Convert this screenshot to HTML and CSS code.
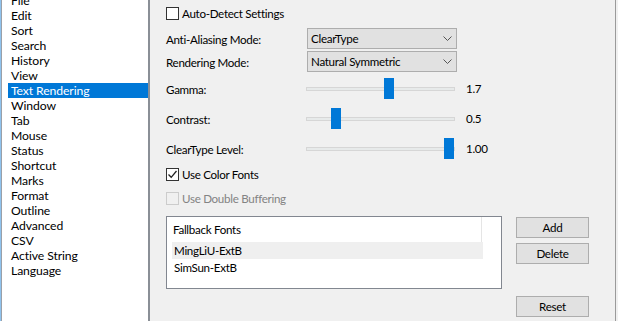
FILE: index.html
```html
<!DOCTYPE html>
<html>
<head>
<meta charset="utf-8">
<link rel="stylesheet" href="styles.css">
</head>
<body>
<div class="window">
  <div class="nav">
    <ul class="nav-list">
      <li>File</li>
      <li>Edit</li>
      <li>Sort</li>
      <li>Search</li>
      <li>History</li>
      <li>View</li>
      <li class="selected">Text Rendering</li>
      <li>Window</li>
      <li>Tab</li>
      <li>Mouse</li>
      <li>Status</li>
      <li>Shortcut</li>
      <li>Marks</li>
      <li>Format</li>
      <li>Outline</li>
      <li>Advanced</li>
      <li>CSV</li>
      <li>Active String</li>
      <li>Language</li>
    </ul>
  </div>
  <div class="panel">
    <div class="check"><span class="box"></span><span>Auto-Detect Settings</span></div>
    <div class="settings">
      <div class="row row-combo">
        <span class="label">Anti-Aliasing Mode:</span>
        <div class="combo"><span>ClearType</span><svg class="chev" width="9" height="5" viewBox="0 0 9 5"><path d="M0.5 0.5 L4.5 4.5 L8.5 0.5" fill="none" stroke="#555" stroke-width="1"/></svg></div>
      </div>
      <div class="row row-combo">
        <span class="label">Rendering Mode:</span>
        <div class="combo"><span>Natural Symmetric</span><svg class="chev" width="9" height="5" viewBox="0 0 9 5"><path d="M0.5 0.5 L4.5 4.5 L8.5 0.5" fill="none" stroke="#555" stroke-width="1"/></svg></div>
      </div>
      <div class="row row-slider first-slider">
        <span class="label">Gamma:</span>
        <div class="slider"><div class="track"></div><div class="thumb" style="left:78px"></div></div>
        <span class="value">1.7</span>
      </div>
      <div class="row row-slider">
        <span class="label">Contrast:</span>
        <div class="slider"><div class="track"></div><div class="thumb" style="left:25px"></div></div>
        <span class="value">0.5</span>
      </div>
      <div class="row row-slider">
        <span class="label">ClearType Level:</span>
        <div class="slider"><div class="track"></div><div class="thumb" style="left:138px"></div></div>
        <span class="value">1.00</span>
      </div>
    </div>
    <div class="check check-color"><span class="box checked"><svg width="11" height="11" viewBox="0 0 11 11"><path d="M1.5 5.5 L4.2 8.3 L9.5 2" fill="none" stroke="#222" stroke-width="1.3"/></svg></span><span>Use Color Fonts</span></div>
    <div class="check check-disabled"><span class="box"></span><span>Use Double Buffering</span></div>
    <div class="bottom">
      <div class="listview">
        <div class="lv-header">Fallback Fonts</div>
        <div class="lv-row lv-hover">MingLiU-ExtB</div>
        <div class="lv-row">SimSun-ExtB</div>
      </div>
      <div class="buttons">
        <div class="btn">Add</div>
        <div class="btn btn-delete">Delete</div>
        <div class="btn btn-reset">Reset</div>
      </div>
    </div>
  </div>
  <div class="edge"></div>
</div>
</body>
</html>
```

FILE: styles.css
```css
html, body {
  margin: 0;
  padding: 0;
  background: #f0f0f0;
}
body {
  font-family: "Lato", "Noto Sans", sans-serif;
  font-size: 11.6px;
  color: #000;
  width: 618px;
  height: 321px;
  overflow: hidden;
}
.window {
  display: flex;
  height: 321px;
}
.nav {
  width: 147px;
  height: 321px;
  background: #fff;
  border-left: 1px solid #8fc3ee;
  box-shadow: inset 1px 0 0 #9aa0a8;
  border-right: 2px solid #8a8f96;
  overflow: hidden;
}
.nav-list {
  list-style: none;
  margin: -7px 0 0 7px;
  padding: 0;
}
.nav-list li {
  height: 15px;
  line-height: 15px;
  padding-left: 3px;
  white-space: nowrap;
  font-size: 12.2px;
  letter-spacing: -0.1px;
}
.nav-list li.selected {
  background: #0078d7;
  color: #fff;
}
.panel {
  width: 449px;
  padding: 7px 0 0 16px;
  letter-spacing: -0.3px;
}
.edge {
  width: 1px;
  height: 321px;
  background: #9a9a9a;
}
.check {
  display: flex;
  align-items: center;
  height: 13px;
  line-height: 13px;
  gap: 3px;
}
.box {
  width: 13px;
  height: 13px;
  box-sizing: border-box;
  border: 1px solid #333;
  background: #fff;
  display: flex;
  align-items: center;
  justify-content: center;
}
.box svg {
  display: block;
}
.check-color {
  margin-top: 5px;
}
.check-disabled {
  margin-top: 11px;
  color: #838383;
}
.check-disabled .box {
  border-color: #cccccc;
  background: transparent;
}
.settings {
  margin-top: 8px;
}
.row {
  display: flex;
  align-items: center;
}
.label {
  width: 141px;
  white-space: nowrap;
}
.row-combo {
  height: 21px;
}
.row-combo + .row-combo {
  margin-top: 2px;
}
.row-combo .label {
  padding-top: 1px;
}
.combo {
  width: 150px;
  height: 21px;
  box-sizing: border-box;
  border: 1px solid #adadad;
  background: #e1e1e1;
  display: flex;
  align-items: center;
  justify-content: space-between;
  padding: 0 4px 0 3px;
}
.chev {
  display: block;
}
.row-slider {
  height: 30px;
}
.first-slider {
  margin-top: 1px;
}
.row-slider .label {
  padding-top: 2px;
}
.slider {
  position: relative;
  width: 149px;
  height: 21px;
  margin-left: -1px;
}
.track {
  position: absolute;
  left: 0;
  right: 0;
  top: 9px;
  height: 4px;
  box-sizing: border-box;
  background: #e7eaea;
  border: 1px solid #d6d6d6;
}
.thumb {
  position: absolute;
  top: 0;
  width: 10px;
  height: 21px;
  background: #0078d7;
}
.value {
  margin-left: 11px;
}
.bottom {
  display: flex;
  gap: 14px;
  margin-top: 11px;
}
.listview {
  width: 336px;
  height: 73px;
  box-sizing: border-box;
  border: 1px solid #828790;
  background: #fff;
}
.lv-header {
  width: 315px;
  height: 25px;
  line-height: 25px;
  padding-left: 6px;
  box-sizing: border-box;
  border-right: 1px solid #e5e5e5;
}
.lv-row {
  width: 311px;
  height: 17px;
  line-height: 17px;
  margin-left: 5px;
  padding-left: 2px;
  box-sizing: border-box;
}
.lv-hover {
  background: #efefef;
}
.buttons {
  display: flex;
  flex-direction: column;
  padding-top: 1px;
}
.btn {
  width: 73px;
  height: 21px;
  box-sizing: border-box;
  border: 1px solid #adadad;
  background: #e1e1e1;
  display: flex;
  align-items: center;
  justify-content: center;
}
.btn-delete {
  margin-top: 5px;
}
.btn-reset {
  margin-top: 32px;
}
```
